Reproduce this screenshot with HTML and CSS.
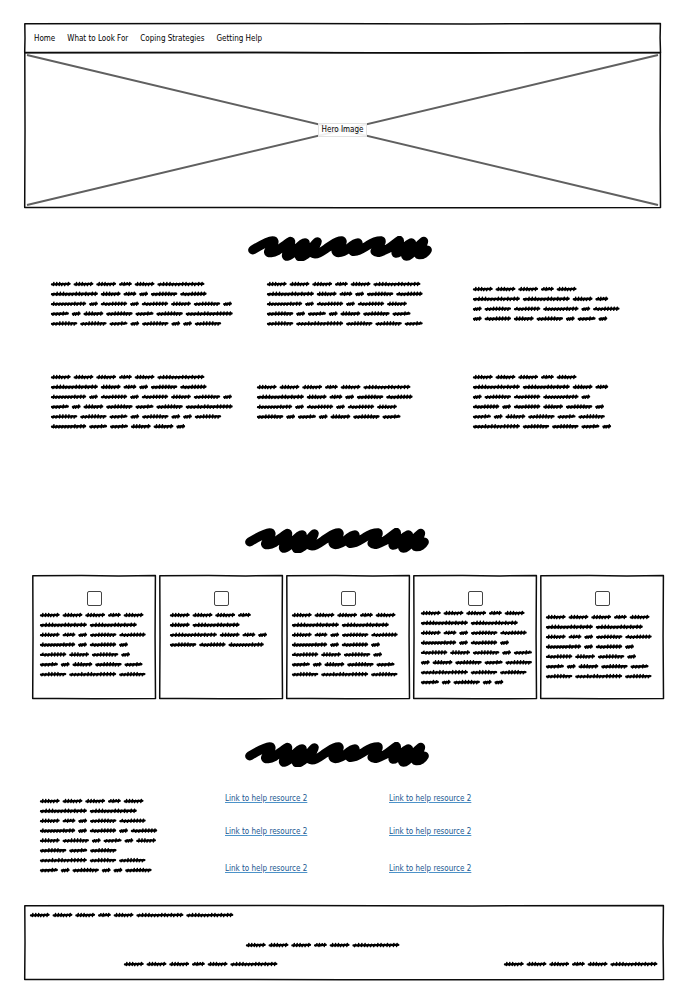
FILE: index.html
```html
<!DOCTYPE html>
<html lang="en">
<head>
<meta charset="utf-8">
<meta name="viewport" content="width=device-width, initial-scale=1">
<title>Help page wireframe</title>
<link rel="stylesheet" href="styles.css">
</head>
<body>
<svg class="defs" aria-hidden="true">
  <symbol id="headline" viewBox="0 0 552 75">
    <path d="M14 42 C32 31 58 15 74 14 C86 14 70 34 62 46 C58 54 76 50 88 44 C100 36 116 22 127 16 C133 14 116 42 115 59 C118 66 134 52 146 40 C156 28 164 20 171 20 C176 22 158 44 153 60 C156 68 174 58 184 46 C193 34 202 20 208 17 C210 22 190 42 194 52 C206 60 228 42 240 34 C256 24 266 14 280 14 C290 16 270 34 264 46 C268 54 286 48 298 40 C310 30 320 20 330 20 C334 26 308 42 314 46 C328 50 346 36 360 28 C372 20 386 14 398 14 C406 16 386 36 381 46 C388 54 404 46 416 40 C430 32 444 20 454 13 C458 16 440 40 444 52 C454 54 474 26 490 20 C496 24 472 46 473 60 C484 66 504 34 527 16 C528 24 506 46 512 56 C524 58 534 50 538 42 M118 36 L200 38 M446 38 L524 36"/>
  </symbol>
</svg>

<main class="page">
  <header class="banner">
    <nav class="nav frame" aria-label="Main">
      <a href="#top">Home</a>
      <a href="#signs">What to Look For</a>
      <a href="#coping">Coping Strategies</a>
      <a href="#help">Getting Help</a>
    </nav>
    <div class="hero frame" id="top">
      <svg class="cross" viewBox="0 0 100 100" preserveAspectRatio="none" aria-hidden="true"><path d="M0 0L100 100M0 100L100 0"/></svg>
      <span class="hero-label">Hero Image</span>
    </div>
  </header>

  <section class="signs" id="signs">
    <svg class="headline"><use href="#headline"/></svg>
    <div class="row row-first">
      <svg data-lines="aaabac cabdef gdfdfaed hdaehej eehdedde"></svg>
      <svg data-lines="aaabac cabdef gdfdfa edhdaeh ejeeh"></svg>
      <svg data-lines="aaaba ccab defgdf dfaedhd"></svg>
    </div>
    <div class="row row-second">
      <svg data-lines="aaabac cabdef gdfdfaed hdaehej eehdedde ghhaad"></svg>
      <svg data-lines="aaabac cabdef gdfdfa edhdaeh"></svg>
      <svg data-lines="aaaba ccab defgd fdfaed hdaehe jeehd"></svg>
    </div>
  </section>

  <section class="coping" id="coping">
    <svg class="headline"><use href="#headline"/></svg>
    <div class="cards">
      <article class="card frame">
        <input type="checkbox" aria-label="Strategy 1">
        <svg data-lines="aaaba cc abdef gdfd faed hdaeh eje"></svg>
      </article>
      <article class="card frame inset-wide">
        <input type="checkbox" aria-label="Strategy 2">
        <svg data-lines="aaab ac cabd efg"></svg>
      </article>
      <article class="card frame inset-narrow">
        <input type="checkbox" aria-label="Strategy 3">
        <svg data-lines="aaaba cc abdef gdfd faed hdaeh eje"></svg>
      </article>
      <article class="card frame tight">
        <input type="checkbox" aria-label="Strategy 4">
        <svg data-lines="aaaba cc abdef gdfd faedh daehe jee hdedd"></svg>
      </article>
      <article class="card frame inset-narrow loose">
        <input type="checkbox" aria-label="Strategy 5">
        <svg data-lines="aaaba cc abdef gdfd faed hdaeh eje"></svg>
      </article>
    </div>
  </section>

  <section class="help" id="help">
    <svg class="headline"><use href="#headline"/></svg>
    <div class="resources">
      <svg data-lines="aaaba cc abdef gdfdf aedhda ehe jee hdedde"></svg>
      <div class="links">
        <a href="#help">Link to help resource 2</a>
        <a href="#help">Link to help resource 2</a>
        <a href="#help">Link to help resource 2</a>
        <a href="#help">Link to help resource 2</a>
        <a href="#help">Link to help resource 2</a>
        <a href="#help">Link to help resource 2</a>
      </div>
    </div>
  </section>

  <footer class="footer frame">
    <svg data-lines="aaabacc"></svg>
    <svg class="footer-middle" data-lines="aaabac"></svg>
    <div class="footer-bottom">
      <svg data-lines="aaabac"></svg>
      <svg data-lines="aaabac"></svg>
    </div>
  </footer>
</main>
<script src="scribble.js"></script>
</body>
</html>
```
FILE: styles.css
```css
* { box-sizing: border-box; }

body {
  margin: 0;
  background: #fff;
  color: #000;
  font: 8px/12px "DejaVu Sans Condensed", Roboto, sans-serif;
}

svg { display: block; flex: none; overflow: visible; }
.defs { position: absolute; width: 0; height: 0; }

.page { padding: 23px 24px 10px; }
.banner { margin-right: 3px; }

.frame { position: relative; }
.outline {
  position: absolute;
  inset: 0;
  width: 100%;
  height: 100%;
  fill: none;
  stroke: #0c0c0c;
  stroke-linejoin: round;
  pointer-events: none;
}
.outline path { vector-effect: non-scaling-stroke; stroke-width: 1.5px; }

.nav {
  display: flex;
  align-items: center;
  gap: 12px;
  height: 30px;
  padding: 2px 10px 0;
}
.nav a { color: #000; text-decoration: none; }

.hero {
  display: grid;
  grid-template-rows: minmax(0, 1fr);
  place-items: center;
  height: 156px;
  margin-top: -1px;
  padding: 3px;
}
.cross, .hero-label { grid-area: 1 / 1; }
.cross { width: 100%; height: 100%; stroke: #606060; }
.cross path { vector-effect: non-scaling-stroke; stroke-width: 2px; }
.hero-label {
  z-index: 1;
  padding: 0 3px;
  border: 1px solid #e2e2e2;
  background: rgba(255, 255, 255, .9);
}

.headline {
  width: 184px;
  height: 25px;
  margin-left: 34.5%;
  fill: none;
  stroke: #000;
  stroke-width: 27px;
  stroke-linecap: round;
  stroke-linejoin: round;
}

.signs { padding-top: 28px; }
.signs .headline { margin-left: 35%; }
.row { display: grid; align-items: center; padding-left: 27px; }
.row-first { grid-template-columns: 216fr 206fr 191fr; margin-top: 20px; }
.row-second { grid-template-columns: 206fr 216fr 191fr; margin-top: 48px; }

.coping { padding-top: 99px; }
.cards {
  display: grid;
  grid-template-columns: repeat(5, 1fr);
  gap: 3px;
  margin: 22px 0 0 8px;
}
.card {
  display: flex;
  flex-direction: column;
  align-items: flex-start;
  gap: 6px;
  min-height: 124px;
  padding: 16px 0 12px;
}
.card input {
  appearance: none;
  align-self: center;
  width: 15px;
  height: 15px;
  margin: 0;
  border: 1px solid #444;
  border-radius: 2px;
}
.card > [data-lines] { margin-left: 8px; }
.inset-wide > [data-lines] { margin-left: 11px; }
.inset-narrow > [data-lines] { margin-left: 6px; }
.tight { gap: 4px; }
.loose { gap: 8px; }

.help { padding-top: 43px; }
.resources {
  display: grid;
  grid-template-columns: 185fr 439fr;
  margin: 26px 0 0 16px;
}
.resources > svg { margin-top: 5px; }
.links {
  display: grid;
  grid-template-columns: 164fr 275fr;
  grid-template-rows: 33px 37px 12px;
  align-items: start;
  justify-items: start;
}
.links a {
  color: #17568f;
  text-decoration-color: #4c93c9;
}

.footer {
  min-height: 74px;
  margin-top: 30px;
  padding: 7px 7px 13px 6px;
}
.footer-middle { margin: 24px 0 0 34.5%; }
.footer-bottom {
  display: flex;
  justify-content: space-between;
  margin-top: 13px;
  padding-left: 15%;
}
```
FILE: scribble.js
```js
const NS = "http://www.w3.org/2000/svg";
const GAP = 3.1;
const LINE = 9.87;

// Each word is a width and the run of pen marks that make it up.
const WORDS = {
  a: [19.6, "tttuut"],
  b: [12.6, "ntnt"],
  c: [46.8, "utttuuuttututt"],
  d: [8.6, "uut"],
  e: [26.2, "uuttttuu"],
  f: [26.2, "nuuttttt"],
  g: [35.1, "tuuuuuututt"],
  h: [17.8, "uuutn"],
  j: [46.8, "uuututtuuttttt"]
};

const MARKS = {
  t: [[-0.1, 1.5], [0.4, -1.6]],
  u: [[-0.6, 1.6], [0.4, -0.7]],
  n: [[-0.9, 0.8], [0.5, -1.3]]
};

function node(name, attrs, parent) {
  const el = document.createElementNS(NS, name);
  for (const key in attrs) el.setAttribute(key, attrs[key]);
  parent.appendChild(el);
  return el;
}

document.querySelectorAll("svg[data-lines]").forEach(svg => {
  let bars = "", ticks = "", widest = 0;
  const lines = svg.dataset.lines.split(" ");
  lines.forEach((line, row) => {
    let x = 0;
    const y = 3 + row * LINE;
    for (const key of line) {
      const [width, marks] = WORDS[key];
      bars += `M${x + 1} ${y + 0.4}L${x + width - 1} ${y - 0.1}`;
      const step = (width - 2) / marks.length;
      [...marks].forEach((mark, i) => {
        const [[dx1, dy1], [dx2, dy2]] = MARKS[mark];
        const cx = x + 1 + step * (i + 0.5);
        ticks += `M${cx + dx1} ${y + dy1}L${cx + dx2} ${y + dy2}`;
      });
      x += width + GAP;
    }
    widest = Math.max(widest, x - GAP);
  });
  svg.setAttribute("width", Math.round(widest));
  svg.setAttribute("height", Math.round(6 + (lines.length - 1) * LINE));
  const style = { fill: "none", stroke: "#000", "stroke-linecap": "round" };
  node("path", { ...style, "stroke-width": 2.3, d: bars }, svg);
  node("path", { ...style, "stroke-width": 1.5, d: ticks }, svg);
});

// Slightly uneven pen outline around every framed box.
document.querySelectorAll(".frame").forEach(box => {
  const svg = node("svg", { class: "outline", preserveAspectRatio: "none", "aria-hidden": "true" }, box);
  const w = box.clientWidth, h = box.clientHeight;
  svg.setAttribute("viewBox", `0 0 ${w} ${h}`);
  node("path", { d: `M0.8 0.8L${w * 0.4} 0.5L${w * 0.7} 0.9L${w - 0.6} 0.6L${w - 0.9} ${h * 0.5}L${w - 0.5} ${h - 0.4}L${w * 0.5} ${h - 0.2}L${w * 0.2} ${h - 0.6}L0.7 ${h - 0.5}L1 ${h * 0.5}Z` }, svg);
});
```
